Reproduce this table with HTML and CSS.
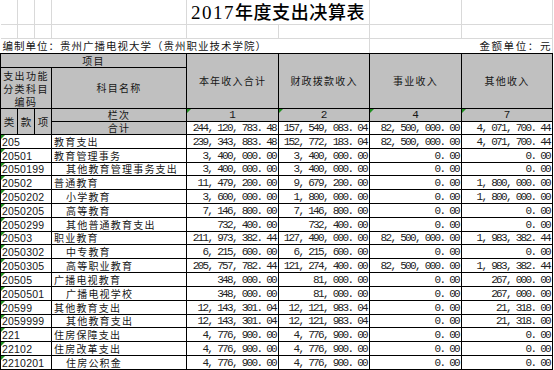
FILE: index.html
```html
<!DOCTYPE html>
<html lang="zh">
<head>
<meta charset="utf-8">
<title>2017年度支出决算表</title>
<link rel="stylesheet" href="styles.css">
</head>
<body>
<table class="sheet">
  <colgroup>
    <col class="w17"><col class="w17"><col class="w17"><col class="w135">
    <col class="w92"><col class="w91"><col class="w92"><col class="w91">
  </colgroup>
  <tr class="r-title">
    <td class="g first"></td><td class="g"></td><td class="g"></td><td class="g"></td>
    <td class="g title" colspan="2"><span class="num-t">2017</span>年度支出决算表</td>
    <td class="g"></td><td class="g"></td>
  </tr>
  <tr class="r-blank">
    <td class="g first"></td><td class="g"></td><td class="g"></td><td class="g"></td>
    <td class="g"></td><td class="g"></td><td class="g"></td><td class="g"></td>
  </tr>
  <tr class="r-unit">
    <td class="g first last-g unit" colspan="6">编制单位：贵州广播电视大学（贵州职业技术学院）</td>
    <td class="g last-g unit right" colspan="2">金额单位：元</td>
  </tr>
  <tr class="r-h1">
    <td class="hd" colspan="4">项目</td>
    <td class="hd" rowspan="2">本年收入合计</td>
    <td class="hd" rowspan="2">财政拨款收入</td>
    <td class="hd" rowspan="2">事业收入</td>
    <td class="hd" rowspan="2">其他收入</td>
  </tr>
  <tr class="r-h2">
    <td class="hd multi" colspan="3">支出功能<br>分类科目<br>编码</td>
    <td class="hd">科目名称</td>
  </tr>
  <tr class="r-13">
    <td class="hd tight" rowspan="2">类</td>
    <td class="hd tight" rowspan="2">款</td>
    <td class="hd tight" rowspan="2">项</td>
    <td class="hd">栏次</td>
    <td class="hd idx mark">1</td>
    <td class="hd idx mark">2</td>
    <td class="hd idx mark">4</td>
    <td class="hd idx mark">7</td>
  </tr>
  <tr class="r-13">
    <td class="hd">合计</td>
    <td class="n">244, 120, 783. 48</td>
    <td class="n">157, 549, 083. 04</td>
    <td class="n">82, 500, 000. 00</td>
    <td class="n">4, 071, 700. 44</td>
  </tr>
  <tr class="r-14"><td class="c mark" colspan="3">205</td><td class="nm">教育支出</td><td class="n">239, 343, 883. 48</td><td class="n">152, 772, 183. 04</td><td class="n">82, 500, 000. 00</td><td class="n">4, 071, 700. 44</td></tr>
  <tr class="r-14"><td class="c mark" colspan="3">20501</td><td class="nm">教育管理事务</td><td class="n">3, 400, 000. 00</td><td class="n">3, 400, 000. 00</td><td class="n">0. 00</td><td class="n">0. 00</td></tr>
  <tr class="r-13"><td class="c mark" colspan="3">2050199</td><td class="nm sub">其他教育管理事务支出</td><td class="n">3, 400, 000. 00</td><td class="n">3, 400, 000. 00</td><td class="n">0. 00</td><td class="n">0. 00</td></tr>
  <tr class="r-14"><td class="c mark" colspan="3">20502</td><td class="nm">普通教育</td><td class="n">11, 479, 200. 00</td><td class="n">9, 679, 200. 00</td><td class="n">0. 00</td><td class="n">1, 800, 000. 00</td></tr>
  <tr class="r-14"><td class="c mark" colspan="3">2050202</td><td class="nm sub">小学教育</td><td class="n">3, 600, 000. 00</td><td class="n">1, 800, 000. 00</td><td class="n">0. 00</td><td class="n">1, 800, 000. 00</td></tr>
  <tr class="r-14"><td class="c mark" colspan="3">2050205</td><td class="nm sub">高等教育</td><td class="n">7, 146, 800. 00</td><td class="n">7, 146, 800. 00</td><td class="n">0. 00</td><td class="n">0. 00</td></tr>
  <tr class="r-14"><td class="c mark" colspan="3">2050299</td><td class="nm sub">其他普通教育支出</td><td class="n">732, 400. 00</td><td class="n">732, 400. 00</td><td class="n">0. 00</td><td class="n">0. 00</td></tr>
  <tr class="r-13"><td class="c mark" colspan="3">20503</td><td class="nm">职业教育</td><td class="n">211, 973, 382. 44</td><td class="n">127, 490, 000. 00</td><td class="n">82, 500, 000. 00</td><td class="n">1, 983, 382. 44</td></tr>
  <tr class="r-14"><td class="c mark" colspan="3">2050302</td><td class="nm sub">中专教育</td><td class="n">6, 215, 600. 00</td><td class="n">6, 215, 600. 00</td><td class="n">0. 00</td><td class="n">0. 00</td></tr>
  <tr class="r-14"><td class="c mark" colspan="3">2050305</td><td class="nm sub">高等职业教育</td><td class="n">205, 757, 782. 44</td><td class="n">121, 274, 400. 00</td><td class="n">82, 500, 000. 00</td><td class="n">1, 983, 382. 44</td></tr>
  <tr class="r-14"><td class="c mark" colspan="3">20505</td><td class="nm">广播电视教育</td><td class="n">348, 000. 00</td><td class="n">81, 000. 00</td><td class="n">0. 00</td><td class="n">267, 000. 00</td></tr>
  <tr class="r-14"><td class="c mark" colspan="3">2050501</td><td class="nm sub">广播电视学校</td><td class="n">348, 000. 00</td><td class="n">81, 000. 00</td><td class="n">0. 00</td><td class="n">267, 000. 00</td></tr>
  <tr class="r-14"><td class="c mark" colspan="3">20599</td><td class="nm">其他教育支出</td><td class="n">12, 143, 301. 04</td><td class="n">12, 121, 983. 04</td><td class="n">0. 00</td><td class="n">21, 318. 00</td></tr>
  <tr class="r-13"><td class="c mark" colspan="3">2059999</td><td class="nm sub">其他教育支出</td><td class="n">12, 143, 301. 04</td><td class="n">12, 121, 983. 04</td><td class="n">0. 00</td><td class="n">21, 318. 00</td></tr>
  <tr class="r-14"><td class="c mark" colspan="3">221</td><td class="nm">住房保障支出</td><td class="n">4, 776, 900. 00</td><td class="n">4, 776, 900. 00</td><td class="n">0. 00</td><td class="n">0. 00</td></tr>
  <tr class="r-14"><td class="c mark" colspan="3">22102</td><td class="nm">住房改革支出</td><td class="n">4, 776, 900. 00</td><td class="n">4, 776, 900. 00</td><td class="n">0. 00</td><td class="n">0. 00</td></tr>
  <tr class="r-14"><td class="c mark" colspan="3">2210201</td><td class="nm sub">住房公积金</td><td class="n">4, 776, 900. 00</td><td class="n">4, 776, 900. 00</td><td class="n">0. 00</td><td class="n">0. 00</td></tr>
</table>
</body>
</html>
```
FILE: styles.css
```css
* { box-sizing: border-box; }
html, body { margin: 0; padding: 0; background: #fff; }
body {
  font-family: "Noto Sans CJK SC", "Liberation Sans", sans-serif;
  color: #161616;
}
.sheet {
  border-collapse: collapse;
  table-layout: fixed;
  width: 553px;
}
.w17 { width: 17px; }
.w135 { width: 135px; }
.w92 { width: 92px; }
.w91 { width: 91px; }

.sheet td {
  position: relative;
  padding: 0;
  border: 1px solid #000;
  font-size: 10px;
  letter-spacing: 1.2px;
  line-height: 12px;
  white-space: nowrap;
  overflow: hidden;
  vertical-align: middle;
}

.r-title { height: 23px; }
.r-blank { height: 14px; }
.r-unit { height: 15px; }
.r-h1 { height: 14px; }
.r-h2 { height: 41px; }
.r-13 { height: 13px; }
.r-14 { height: 14px; }

.sheet td.g { border-color: #d9d9d9; }
.sheet .r-title td.g { border-top: none; }
.sheet td.first { border-left: none; }
.sheet td.last-g { border-bottom: 1px solid #000; }

.sheet td.title {
  text-align: center;
  font-size: 18px;
  letter-spacing: 0.6px;
  font-weight: 500;
  color: #000;
  line-height: 22px;
  overflow: visible;
}
.sheet .num-t {
  font-family: "Liberation Serif", serif;
  font-size: 19px;
  letter-spacing: 1.5px;
}

.sheet td.unit { padding-left: 2px; font-size: 10.5px; letter-spacing: 1px; }
.sheet td.unit.right { text-align: right; padding-left: 0; letter-spacing: 1.6px; }

.sheet td.hd {
  background: #c0c0c0;
  text-align: center;
}
.sheet td.multi { line-height: 13px; letter-spacing: 1.4px; }
.sheet td.tight { letter-spacing: 0; font-size: 10.5px; }
.sheet td.idx {
  font-family: "Liberation Mono", monospace;
  font-size: 11px;
  letter-spacing: 0;
}

.sheet td.n {
  font-family: "Liberation Mono", monospace;
  font-size: 11px;
  letter-spacing: -1.7px;
  text-align: right;
  padding-right: 2px;
  color: #222;
}
.sheet td.c {
  font-family: "Liberation Sans", sans-serif;
  font-size: 10.5px;
  letter-spacing: 0.2px;
  padding-left: 1px;
}
.sheet td.nm { padding-left: 2px; }
.sheet td.nm.sub { padding-left: 14px; }

.sheet td.mark::before {
  content: "";
  position: absolute;
  left: 0;
  top: 0;
  border-top: 4px solid #1f8f1f;
  border-right: 4px solid transparent;
}
```
